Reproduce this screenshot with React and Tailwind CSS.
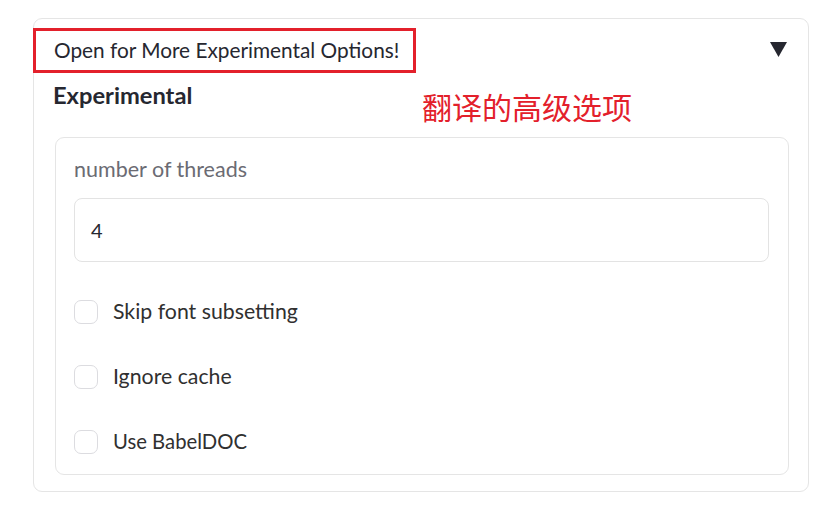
import React from "react";

function Check({ label, size = "text-[21.3px]" }) {
  return (
    <div className="flex items-center h-[65px]">
      <div className="w-[24px] h-[24px] rounded-[7px] border border-[#dcdce0] bg-white shrink-0" />
      <span className={`ml-[15px] ${size} text-[#303030] leading-none`}>{label}</span>
    </div>
  );
}

export default function App() {
  return (
    <div
      className="w-[831px] h-[506px] bg-white pt-[18px] pl-[33px] pr-[22px] relative"
      style={{ fontFamily: "Lato, 'Noto Sans', sans-serif" }}
    >
      <div className="border border-[#e5e5e5] rounded-[9px] h-[474px] relative">
        <div className="flex items-center justify-between pt-[9px] pr-[21px]">
          <div className="-ml-[1px] h-[45px] w-[383px] border-[3px] border-[#e3202b] flex items-center pl-[18px]">
            <span className="text-[20.8px] text-[#262730] leading-none">Open for More Experimental Options!</span>
          </div>
          <svg width="17" height="15" viewBox="0 0 17 15" className="mt-[-2px]">
            <path d="M0 0 H17 L8.5 15 Z" fill="#262730" />
          </svg>
        </div>
        <div className="pl-[21px] pr-[19px]">
          <div className="mt-[8px] -ml-[2px] text-[23.7px] font-bold text-[#262730] leading-[28px]">Experimental</div>
          <div className="mt-[28px] border border-[#e5e5e5] rounded-[9px] h-[338px] pl-[18px] pr-[19px] pt-[18px]">
            <div className="text-[21.5px] text-[#6b6b73] leading-[26px]">number of threads</div>
            <div className="mt-[16px] h-[64px] border border-[#e3e3e3] rounded-[8px] flex items-center pl-[16px]">
              <span className="text-[20px] text-[#262730]">4</span>
            </div>
            <div className="mt-[17px]">
              <Check label="Skip font subsetting" />
              <Check label="Ignore cache" />
              <Check label="Use BabelDOC" size="text-[20.3px]" />
            </div>
          </div>
        </div>
        <div
          className="absolute left-[388px] top-[72px] text-[30px] text-[#e3202b] leading-none"
          style={{ fontFamily: "'Noto Sans CJK SC', sans-serif" }}
        >
          翻译的高级选项
        </div>
      </div>
    </div>
  );
}
